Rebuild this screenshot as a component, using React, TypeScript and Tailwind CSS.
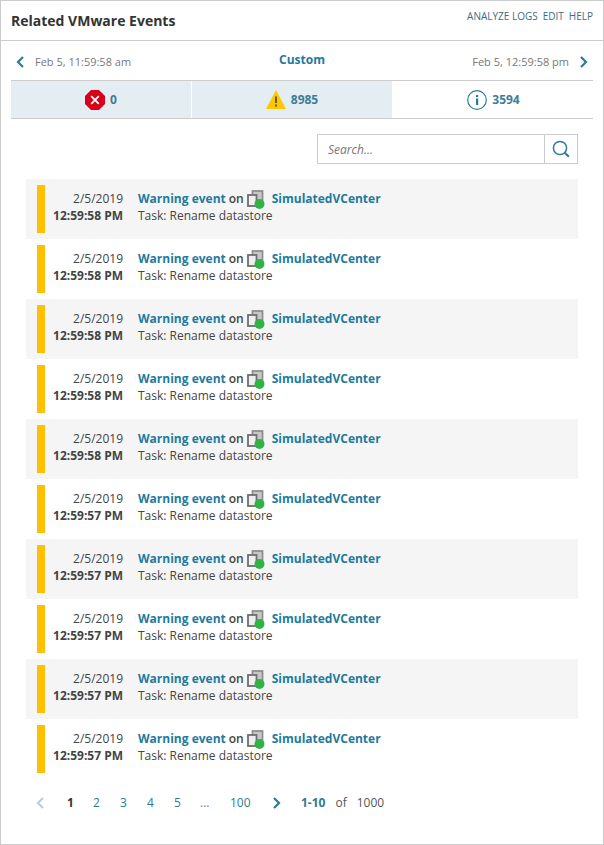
function ErrorIcon() {
  return (
    <svg width="20" height="20" viewBox="0 0 20 20">
      <polygon points="6,0 14,0 20,6 20,14 14,20 6,20 0,14 0,6" fill="#d9001b" />
      <path d="M6.2 6.2 13.8 13.8M13.8 6.2 6.2 13.8" stroke="#fff" strokeWidth="1.8" />
    </svg>
  );
}

function WarningIcon() {
  return (
    <svg width="20" height="19" viewBox="0 0 20 19">
      <polygon points="10,0 20,19 0,19" fill="#fec800" />
      <rect x="9" y="6.5" width="2" height="6.5" fill="#6b5a1a" />
      <rect x="9" y="14.5" width="2" height="2" fill="#6b5a1a" />
    </svg>
  );
}

function InfoIcon() {
  return (
    <svg width="20" height="20" viewBox="0 0 20 20">
      <circle cx="10" cy="10" r="9.3" fill="none" stroke="#2e7a96" strokeWidth="1.2" />
      <rect x="9" y="8.5" width="2.2" height="6.5" fill="#2e7a96" />
      <rect x="9" y="5" width="2.2" height="2.2" fill="#2e7a96" />
    </svg>
  );
}

function NodeIcon() {
  return (
    <svg width="22" height="22" viewBox="0 0 22 22">
      <rect x="5.5" y="2" width="10" height="10" fill="#c8c8c8" stroke="#8f8f8f" strokeWidth="1.8" />
      <rect x="1" y="6" width="8.5" height="11" fill="#efefef" stroke="#6e6e6e" strokeWidth="1.8" />
      <circle cx="12.5" cy="15" r="5" fill="#2fb344" />
    </svg>
  );
}

function Chevron({ left, color = "#2e7a96" }: { left?: boolean; color?: string }) {
  return (
    <svg width="9" height="12" viewBox="0 0 9 12">
      <path
        d={left ? "M7 1 2 6l5 5" : "M2 1l5 5-5 5"}
        fill="none"
        stroke={color}
        strokeWidth="2.2"
      />
    </svg>
  );
}

function EventRow({ time, shaded }: { time: string; shaded: boolean }) {
  return (
    <div className={`flex h-[60px] items-center pl-[11px] ${shaded ? "bg-[#f5f5f5]" : "bg-white"}`}>
      <div className="h-[48px] w-[8px] bg-[#fdc100]" />
      <div className="mb-[4px] w-[78px] text-right text-[12px] leading-[17px] text-[#444]">
        <div>2/5/2019</div>
        <div className="font-bold">{time}</div>
      </div>
      <div className="mb-[4px] ml-[15px] text-[12px] leading-[17px] text-[#444]">
        <div className="flex h-[17px] items-center">
          <span className="font-bold text-[#1f7a9c]">Warning event</span>
          <span className="ml-[3px] font-semibold">on</span>
          <span className="ml-[3px] mt-[3px]">
            <NodeIcon />
          </span>
          <span className="ml-[3px] font-bold text-[#1f7a9c]">SimulatedVCenter</span>
        </div>
        <div>Task: Rename datastore</div>
      </div>
    </div>
  );
}

export default function App() {
  const times = [
    "12:59:58 PM",
    "12:59:58 PM",
    "12:59:58 PM",
    "12:59:58 PM",
    "12:59:58 PM",
    "12:59:57 PM",
    "12:59:57 PM",
    "12:59:57 PM",
    "12:59:57 PM",
    "12:59:57 PM",
  ];

  return (
    <div className="h-[845px] w-[604px] border border-[#ccc] bg-white font-['Open_Sans',sans-serif]">
      <div className="flex h-[40px] items-center justify-between border-b border-[#ccc] pl-[10px] pr-[10px]">
        <div className="text-[14px] font-bold text-[#333]">Related VMware Events</div>
        <div className="mb-[9px] flex gap-[5px] text-[10px] text-[#3c6e82]">
          <span>ANALYZE LOGS</span>
          <span>EDIT</span>
          <span>HELP</span>
        </div>
      </div>

      <div className="relative flex h-[39px] items-center justify-between pl-[15px] pr-[15px] pt-[3px] text-[11px] text-[#777]">
        <div className="flex items-center gap-[10px]">
          <Chevron left />
          <span>Feb 5, 11:59:58 am</span>
        </div>
        <div className="absolute left-[278px] top-[10px] text-[12px] font-bold text-[#1f7a9c]">Custom</div>
        <div className="flex items-center gap-[10px]">
          <span>Feb 5, 12:59:58 pm</span>
          <Chevron />
        </div>
      </div>

      <div className="mx-[10px] flex h-[39px] border-y border-[#ccc] text-[12px] font-bold text-[#3c7d98]">
        <div className="flex w-[181px] items-center justify-center gap-[5px] border-r border-white bg-[#e4edf2]">
          <ErrorIcon />
          <span>0</span>
        </div>
        <div className="flex w-[200px] items-center justify-center gap-[5px] bg-[#e4edf2]">
          <WarningIcon />
          <span>8985</span>
        </div>
        <div className="flex flex-1 items-center justify-center gap-[5px] pl-[2px]">
          <InfoIcon />
          <span>3594</span>
        </div>
      </div>

      <div className="mr-[25px] mt-[15px] flex justify-end">
        <div className="flex h-[30px] w-[261px] border border-[#ccc]">
          <div className="flex flex-1 items-center pl-[10px] pt-[1px] text-[12px] italic text-[#777]">Search...</div>
          <div className="flex w-[33px] items-center justify-center border-l border-[#ccc]">
            <svg width="18" height="18" viewBox="0 0 18 18">
              <circle cx="8" cy="8" r="6.6" fill="none" stroke="#2e7a96" strokeWidth="1.5" />
              <path d="m12.8 12.8 4 4" stroke="#2e7a96" strokeWidth="2" />
            </svg>
          </div>
        </div>
      </div>

      <div className="ml-[25px] mr-[25px] mt-[15px]">
        {times.map((time, i) => (
          <EventRow key={i} time={time} shaded={i % 2 === 0} />
        ))}
      </div>

      <div className="ml-[35px] mt-[14px] flex h-[20px] items-center text-[12px] text-[#2e7a96]">
        <Chevron left color="#b5d0da" />
        <span className="ml-[22px] w-[26px] font-bold text-[#333]">1</span>
        <span className="w-[27px]">2</span>
        <span className="w-[27px]">3</span>
        <span className="w-[27px]">4</span>
        <span className="w-[26px]">5</span>
        <span className="w-[30px] text-[#777]">...</span>
        <span className="w-[42px]">100</span>
        <Chevron />
        <span className="ml-[20px] font-bold">1-10</span>
        <span className="ml-[10px] text-[#555]">of</span>
        <span className="ml-[10px] text-[#555]">1000</span>
      </div>
    </div>
  );
}
